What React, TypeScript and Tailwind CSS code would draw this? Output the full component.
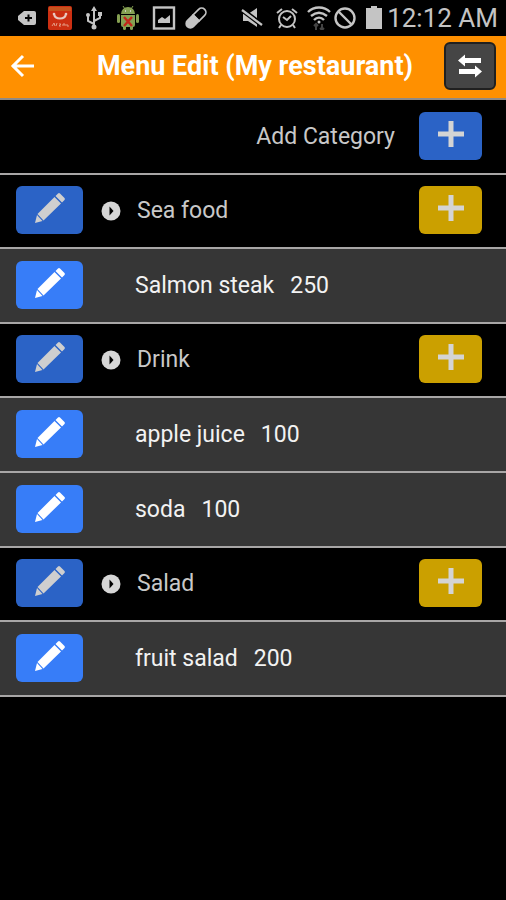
import React from 'react';

type Item = { name: string; price: number };
type Category = { name: string; items: Item[] };

const menu: Category[] = [
  { name: 'Sea food', items: [{ name: 'Salmon steak', price: 250 }] },
  { name: 'Drink', items: [{ name: 'apple juice', price: 100 }, { name: 'soda', price: 100 }] },
  { name: 'Salad', items: [{ name: 'fruit salad', price: 200 }] },
];

function StatusBar() {
  return (
    <div className="flex h-9 items-center bg-black pl-4 pr-2 text-[#c4c4c4]">
      <div className="flex items-center gap-3">
        <svg className="h-6 w-5" viewBox="0 0 20 24" fill="currentColor" aria-hidden="true">
          <path d="M8 5h10a2 2 0 0 1 2 2v10a2 2 0 0 1-2 2H8l-6-5v-4z" />
          <path d="M12.500 8.500v7M9 12h7" stroke="#000" strokeWidth="2" />
        </svg>
        <svg className="h-6 w-6" viewBox="0 0 24 24" aria-hidden="true">
          <rect width="24" height="24" rx="2" fill="#cc2f12" />
          <path d="M1 1h22v4H1z" fill="#c4531f" />
          <path d="M6 8c1 6 11 6 12 0" fill="none" stroke="#e8c9c0" strokeWidth="2" />
          <circle cx="6" cy="8" r="1.300" fill="#e8c9c0" />
          <circle cx="18" cy="8" r="1.300" fill="#e8c9c0" />
          <path d="M4 20l2-3 1 3M9 17l-1 3M11 18h2l-2 2h2M15 20v-2h2v2M19 18v2h2" fill="none" stroke="#e39a83" strokeWidth="1" />
        </svg>
        <svg className="h-6 w-5" viewBox="0 0 20 24" fill="none" stroke="currentColor" strokeWidth="2" aria-hidden="true">
          <path d="M10 3v18M10 18l-6-3V9M10 15l6-3V8" />
          <path d="M10 0l3 5H7zM14 6h4v4h-4z" fill="currentColor" stroke="none" />
          <circle cx="4" cy="9" r="2" fill="currentColor" stroke="none" />
          <circle cx="10" cy="21" r="2.500" fill="currentColor" stroke="none" />
        </svg>
        <svg className="h-6 w-6" viewBox="0 0 24 24" aria-hidden="true">
          <g fill="#85a052">
            <path d="M5 8a7 7 0 0 1 14 0zM5 9h14v10a2 2 0 0 1-2 2H7a2 2 0 0 1-2-2z" />
            <rect x="1" y="8" width="3" height="9" rx="1.500" />
            <rect x="20" y="8" width="3" height="9" rx="1.500" />
            <rect x="7" y="18" width="3" height="6" rx="1.500" />
            <rect x="14" y="18" width="3" height="6" rx="1.500" />
          </g>
          <path d="M7 0l2 3M17 0l-2 3" stroke="#85a052" />
          <path d="M9 5h1M14 5h1" stroke="#ddd" strokeWidth="1.500" />
          <path d="M8 11l8 9M16 11l-8 9" stroke="#c3261b" strokeWidth="2.400" />
        </svg>
        <svg className="h-6 w-6" viewBox="0 0 24 24" aria-hidden="true">
          <rect x="2" y="1.500" width="20" height="21" fill="none" stroke="currentColor" strokeWidth="2.400" />
          <path d="M6 17v-3l4-3 3 2 5-4v8z" fill="currentColor" />
        </svg>
        <svg className="-ml-1 h-6 w-6" viewBox="0 0 24 24" aria-hidden="true">
          <g transform="rotate(-45 12 12)">
            <path d="M12 7.750h8a4.250 4.250 0 0 1 0 8.500h-8z" fill="none" stroke="currentColor" strokeWidth="1.700" />
            <path d="M13 7H4a5 5 0 0 0 0 10h9z" fill="currentColor" />
          </g>
        </svg>
      </div>
      <div className="ml-auto flex items-center gap-2">
        <svg className="mr-1 h-6 w-6" viewBox="0 0 24 24" aria-hidden="true">
          <path d="M4 8h5l9-6v19l-9-6H4z" fill="currentColor" />
          <path d="M2 3l21 16" stroke="#000" strokeWidth="5" />
          <path d="M3 4l20 15" stroke="currentColor" strokeWidth="2.200" />
        </svg>
        <svg className="h-6 w-6" viewBox="0 0 24 24" fill="none" stroke="currentColor" strokeWidth="2" aria-hidden="true">
          <circle cx="12" cy="13" r="8" />
          <path d="M8 11l4 3 4-4M2 7l5-4M22 7l-5-4M6 19l-2 3M18 19l2 3" />
        </svg>
        <svg className="h-6 w-6" viewBox="0 0 24 24" fill="none" stroke="currentColor" strokeWidth="2.400" aria-hidden="true">
          <path d="M1 6C7 0 17 0 23 6M4 10c5-4 11-4 16 0M7 14c3-3 7-3 10 0" />
          <circle cx="12" cy="16" r="1.500" fill="currentColor" stroke="none" />
          <path d="M9 24v-6M7 20l2-2 2 2M15 18v6M13 22l2 2 2-2" stroke="#444" strokeWidth="2" />
        </svg>
        <svg className="-ml-1.5 h-6 w-6" viewBox="0 0 24 24" fill="none" stroke="currentColor" strokeWidth="2.400" aria-hidden="true">
          <circle cx="12" cy="12" r="9.500" />
          <path d="M5 5l14 14" />
        </svg>
        <svg className="h-6 w-[18px]" viewBox="0 0 18 24" fill="currentColor" aria-hidden="true">
          <path d="M1 2h5V0h6v2h5v21H1z" />
        </svg>
        <time className="-ml-1 text-[26px] leading-9">12:12 AM</time>
      </div>
    </div>
  );
}

function PencilIcon() {
  return (
    <svg className="mb-1 h-8 w-8" viewBox="0 0 32 32" fill="currentColor" aria-hidden="true">
      <path d="M24 1.500a1.500 1.500 0 0 1 2 0l4.500 4.500a1.500 1.500 0 0 1 0 2l-2.500 2.500-6.500-6.500zM20.500 5l6.500 6.500L9.500 28.500 3.500 22z" />
      <path d="M3 23l5.500 6L1 31z" />
    </svg>
  );
}

function PlusIcon() {
  return (
    <svg className="mb-1 h-7 w-7" viewBox="0 0 28 28" stroke="currentColor" strokeWidth="5" aria-hidden="true">
      <path d="M14 1v26M1 14h26" />
    </svg>
  );
}

function EditButton({ label, active }: { label: string; active?: boolean }) {
  return (
    <button
      type="button"
      aria-label={label}
      className={`mb-0.5 flex h-12 w-[67px] shrink-0 items-center justify-center rounded-md ${
        active ? 'bg-[#377df8] text-white' : 'bg-[#2b63c6] text-[#cfcfcf]'
      }`}
    >
      <PencilIcon />
    </button>
  );
}

function AddButton({ label, primary }: { label: string; primary?: boolean }) {
  return (
    <button
      type="button"
      aria-label={label}
      className={`mb-0.5 ml-6 flex h-12 w-[63px] shrink-0 items-center justify-center rounded-md text-[#d4d4d4] ${
        primary ? 'bg-[#2b63c6]' : 'bg-[#cba000]'
      }`}
    >
      <PlusIcon />
    </button>
  );
}

export default function App() {
  return (
    <div className="min-h-screen bg-black font-['Roboto',sans-serif] text-[23px] leading-8 text-[#c8c8c8]">
      <StatusBar />
      <header className="flex h-16 items-center border-b-2 border-[#918a84] bg-[#ff9000] pl-2.5 pr-2.5 text-white">
        <button type="button" aria-label="Back" className="mb-0.5 flex h-12 w-7 items-center">
          <svg className="h-7 w-7" viewBox="0 0 28 28" fill="none" stroke="currentColor" strokeWidth="3" aria-hidden="true">
            <path d="M13 4L3 14l10 10M2 14h22" />
          </svg>
        </button>
        <h1 className="mb-0.5 flex-1 whitespace-nowrap pl-7 text-center text-[27px] font-bold">Menu Edit (My restaurant)</h1>
        <button
          type="button"
          aria-label="Swap order"
          className="mb-0.5 flex h-12 w-[52px] items-center justify-center rounded-md border-2 border-[#202020] bg-[#454545]"
        >
          <svg className="h-6 w-6" viewBox="0 0 24 24" fill="currentColor" aria-hidden="true">
            <path d="M0 6.500l7-6V4h16v5H7v3.500zM24 17.500l-7 6V20H1v-5h16v-3.500z" />
          </svg>
        </button>
      </header>
      <main>
        <div className="flex h-[75px] items-center justify-end border-b-2 border-[#a8a6a6] pl-4 pr-6">
          <span>Add Category</span>
          <AddButton label="Add Category" primary />
        </div>
        {menu.map((category) => (
          <section key={category.name}>
            <div className="flex h-[74px] items-center border-b-2 border-[#a8a6a6] pl-4 pr-6">
              <EditButton label={`Edit ${category.name}`} />
              <svg className="ml-[18px] h-5 w-5 shrink-0" viewBox="0 0 20 20" aria-hidden="true">
                <circle cx="10" cy="10" r="9.500" fill="#d6d6d6" />
                <path d="M8.500 5.500L12.500 10l-4 4.500z" fill="#000" />
              </svg>
              <h2 className="ml-4 flex-1">{category.name}</h2>
              <AddButton label={`Add item to ${category.name}`} />
            </div>
            <ul>
              {category.items.map((item) => (
                <li
                  key={item.name}
                  className="flex h-[75px] items-center border-b-2 border-[#a8a6a6] bg-[#363636] pl-4 pr-6 text-[#f2f2f2]"
                >
                  <EditButton label={`Edit ${item.name}`} active />
                  <span className="ml-[52px]">{item.name}</span>
                  <span className="ml-4">{item.price}</span>
                </li>
              ))}
            </ul>
          </section>
        ))}
      </main>
    </div>
  );
}
